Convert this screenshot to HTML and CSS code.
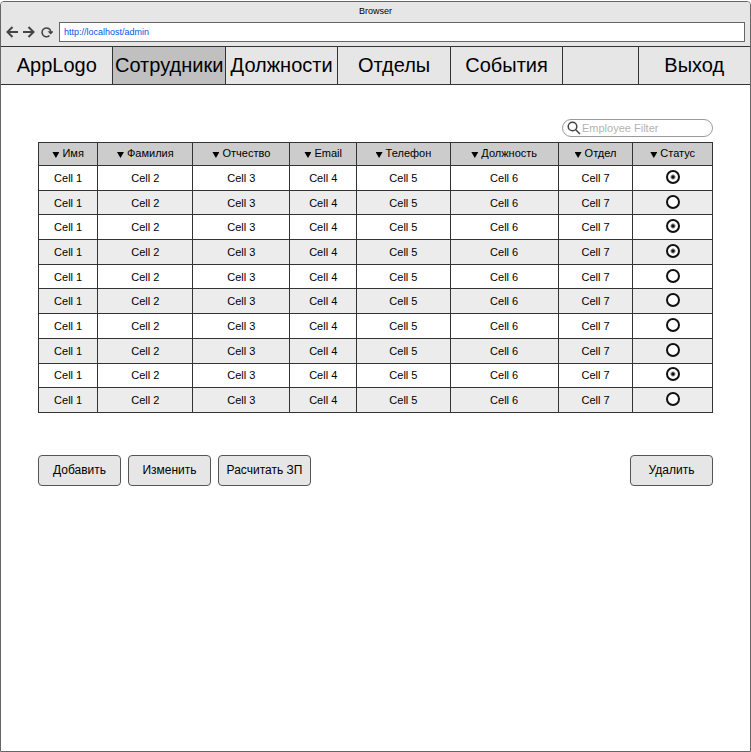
FILE: index.html
```html
<!DOCTYPE html>
<html lang="ru">
<head>
<meta charset="utf-8">
<title>Browser</title>
<link rel="stylesheet" href="styles.css">
</head>
<body>
<div class="window">
  <header class="chrome">
    <div class="title">Browser</div>
    <div class="toolbar">
      <button class="tool" type="button" aria-label="Назад"><svg viewBox="0 0 12 12"><path d="M12 6H2M6.500 1L1.500 6l5 5"/></svg></button>
      <button class="tool" type="button" aria-label="Вперёд"><svg viewBox="0 0 12 12"><path d="M0 6h10M5.500 1l5 5-5 5"/></svg></button>
      <button class="tool reload" type="button" aria-label="Обновить"><svg viewBox="0 0 12 12"><path d="M8.400 9.600A4.400 4.400 0 1 1 9.800 5.600"/><path class="solid" d="M6.600 5.200h5.400v1L9.600 8.400z"/></svg></button>
      <input class="address" type="text" aria-label="Адрес" value="http://localhost/admin">
    </div>
  </header>
  <nav class="menu">
    <a href="#">AppLogo</a>
    <a href="#" class="active">Сотрудники</a>
    <a href="#">Должности</a>
    <a href="#">Отделы</a>
    <a href="#">События</a>
    <span class="spacer"></span>
    <a href="#">Выход</a>
  </nav>
  <main class="content">
    <label class="search">
      <svg viewBox="0 0 14 14"><circle cx="5.500" cy="5.500" r="4.300"/><path d="M8.700 8.700l4.300 4.300"/></svg>
      <input type="text" placeholder="Employee Filter" aria-label="Employee Filter">
    </label>
    <table class="staff">
      <colgroup><col class="c-name"><col class="c-surname"><col class="c-patronymic"><col class="c-email"><col class="c-phone"><col class="c-post"><col class="c-dept"><col class="c-status"></colgroup>
      <thead>
        <tr><th><i></i>Имя</th><th><i></i>Фамилия</th><th><i></i>Отчество</th><th><i></i>Email</th><th><i></i>Телефон</th><th><i></i>Должность</th><th><i></i>Отдел</th><th><i></i>Статус</th></tr>
      </thead>
      <tbody>
        <tr><td>Cell 1</td><td>Cell 2</td><td>Cell 3</td><td>Cell 4</td><td>Cell 5</td><td>Cell 6</td><td>Cell 7</td><td><input type="radio" name="s1" aria-label="Статус 1" checked></td></tr>
        <tr><td>Cell 1</td><td>Cell 2</td><td>Cell 3</td><td>Cell 4</td><td>Cell 5</td><td>Cell 6</td><td>Cell 7</td><td><input type="radio" name="s2" aria-label="Статус 2"></td></tr>
        <tr><td>Cell 1</td><td>Cell 2</td><td>Cell 3</td><td>Cell 4</td><td>Cell 5</td><td>Cell 6</td><td>Cell 7</td><td><input type="radio" name="s3" aria-label="Статус 3" checked></td></tr>
        <tr><td>Cell 1</td><td>Cell 2</td><td>Cell 3</td><td>Cell 4</td><td>Cell 5</td><td>Cell 6</td><td>Cell 7</td><td><input type="radio" name="s4" aria-label="Статус 4" checked></td></tr>
        <tr><td>Cell 1</td><td>Cell 2</td><td>Cell 3</td><td>Cell 4</td><td>Cell 5</td><td>Cell 6</td><td>Cell 7</td><td><input type="radio" name="s5" aria-label="Статус 5"></td></tr>
        <tr><td>Cell 1</td><td>Cell 2</td><td>Cell 3</td><td>Cell 4</td><td>Cell 5</td><td>Cell 6</td><td>Cell 7</td><td><input type="radio" name="s6" aria-label="Статус 6"></td></tr>
        <tr><td>Cell 1</td><td>Cell 2</td><td>Cell 3</td><td>Cell 4</td><td>Cell 5</td><td>Cell 6</td><td>Cell 7</td><td><input type="radio" name="s7" aria-label="Статус 7"></td></tr>
        <tr><td>Cell 1</td><td>Cell 2</td><td>Cell 3</td><td>Cell 4</td><td>Cell 5</td><td>Cell 6</td><td>Cell 7</td><td><input type="radio" name="s8" aria-label="Статус 8"></td></tr>
        <tr><td>Cell 1</td><td>Cell 2</td><td>Cell 3</td><td>Cell 4</td><td>Cell 5</td><td>Cell 6</td><td>Cell 7</td><td><input type="radio" name="s9" aria-label="Статус 9" checked></td></tr>
        <tr><td>Cell 1</td><td>Cell 2</td><td>Cell 3</td><td>Cell 4</td><td>Cell 5</td><td>Cell 6</td><td>Cell 7</td><td><input type="radio" name="s10" aria-label="Статус 10"></td></tr>
      </tbody>
    </table>
    <div class="actions">
      <button type="button">Добавить</button>
      <button type="button">Изменить</button>
      <button type="button" class="wide">Расчитать ЗП</button>
      <button type="button" class="remove">Удалить</button>
    </div>
  </main>
</div>
</body>
</html>
```
FILE: styles.css
```css
* { box-sizing: border-box; }

body {
  margin: 0;
  background: #fff;
  color: #000;
  font: 11px/16px "Liberation Sans", Arial, sans-serif;
}

button, input { font: inherit; color: inherit; }

.window {
  min-height: calc(100vh - 1px);
  margin-top: 1px;
  border: 1px solid #666;
  border-radius: 4px 4px 0 0;
  overflow: hidden;
}

.chrome { height: 44px; background: #e6e6e6; }

.title {
  height: 20px;
  font-size: 9px;
  line-height: 18px;
  text-align: center;
}

.toolbar {
  display: flex;
  align-items: center;
  gap: 5px;
  padding: 0 5px;
}

.tool {
  width: 12px;
  height: 12px;
  padding: 0;
  border: 0;
  background: none;
}

.tool svg {
  display: block;
  width: 12px;
  height: 12px;
  fill: none;
  stroke: #444;
  stroke-width: 2;
}

.reload { width: 14px; }
.reload svg { width: 14px; stroke-width: 1.5; overflow: visible; }
.reload .solid { fill: #444; stroke: none; }

.address {
  flex: 1;
  height: 20px;
  padding: 0 4px;
  border: 1px solid #666;
  background: #fff;
  color: #0057e0;
  font-size: 9px;
}

.menu {
  display: grid;
  grid-template-columns: repeat(5, 3fr) 2fr 3fr;
  gap: 1px;
  padding: 1px 0;
  background: #333;
  line-height: 37px;
}

.menu > * { min-width: 0; background: #e6e6e6; }

.menu a {
  color: #000;
  font-size: 20px;
  text-align: center;
  text-decoration: none;
}

.menu .active { background: #c0c0c0; }

.content {
  display: flex;
  flex-direction: column;
  padding: 34px 37px;
}

.search {
  display: flex;
  align-items: center;
  align-self: flex-end;
  gap: 1px;
  width: 151px;
  height: 18px;
  padding: 0 4px;
  border: 1px solid #999;
  border-radius: 9px;
}

.search svg {
  flex: none;
  width: 14px;
  height: 14px;
  fill: none;
  stroke: #444;
  stroke-width: 1.5;
}

.search input {
  flex: 1;
  min-width: 0;
  padding: 0;
  border: 0;
  outline: 0;
  background: none;
}

.search input::placeholder { color: #b3b3b3; opacity: 1; }

.staff {
  width: 100%;
  height: 271px;
  margin-top: 5px;
  border-collapse: collapse;
  table-layout: fixed;
  text-align: center;
}

.c-name { width: 8.8%; }
.c-surname { width: 14.1%; }
.c-patronymic { width: 14.4%; }
.c-email { width: 9.9%; }
.c-phone { width: 13.9%; }
.c-post { width: 16%; }
.c-dept { width: 11.1%; }
.c-status { width: 11.8%; }

.staff th, .staff td { padding: 0; border: 1px solid #333; }

.staff th {
  height: 23px;
  padding-bottom: 2px;
  background: #ccc;
  font-weight: 400;
}

.staff tbody tr:nth-child(even) { background: #ececec; }

.staff i {
  display: inline-block;
  width: 7px;
  height: 6px;
  margin-right: 3px;
  background: #000;
  clip-path: polygon(0 0, 100% 0, 50% 100%);
  vertical-align: -1px;
}

.staff td:last-child { padding-bottom: 2px; }

.staff input {
  display: block;
  width: 14px;
  height: 14px;
  margin: 0 auto;
  border: 2px solid #111;
  border-radius: 50%;
  appearance: none;
  background: #fff;
}

.staff input:checked { background: radial-gradient(circle, #111 1px, #fff 3px); }

.actions {
  display: flex;
  gap: 7px;
  margin-top: 42px;
}

.actions button {
  width: 83px;
  height: 31px;
  padding: 0 0 2px;
  border: 1px solid #555;
  border-radius: 4px;
  background: #e6e6e6;
  font-size: 12px;
}

.actions .wide { width: 93px; }
.actions .remove { margin-left: auto; }
```
